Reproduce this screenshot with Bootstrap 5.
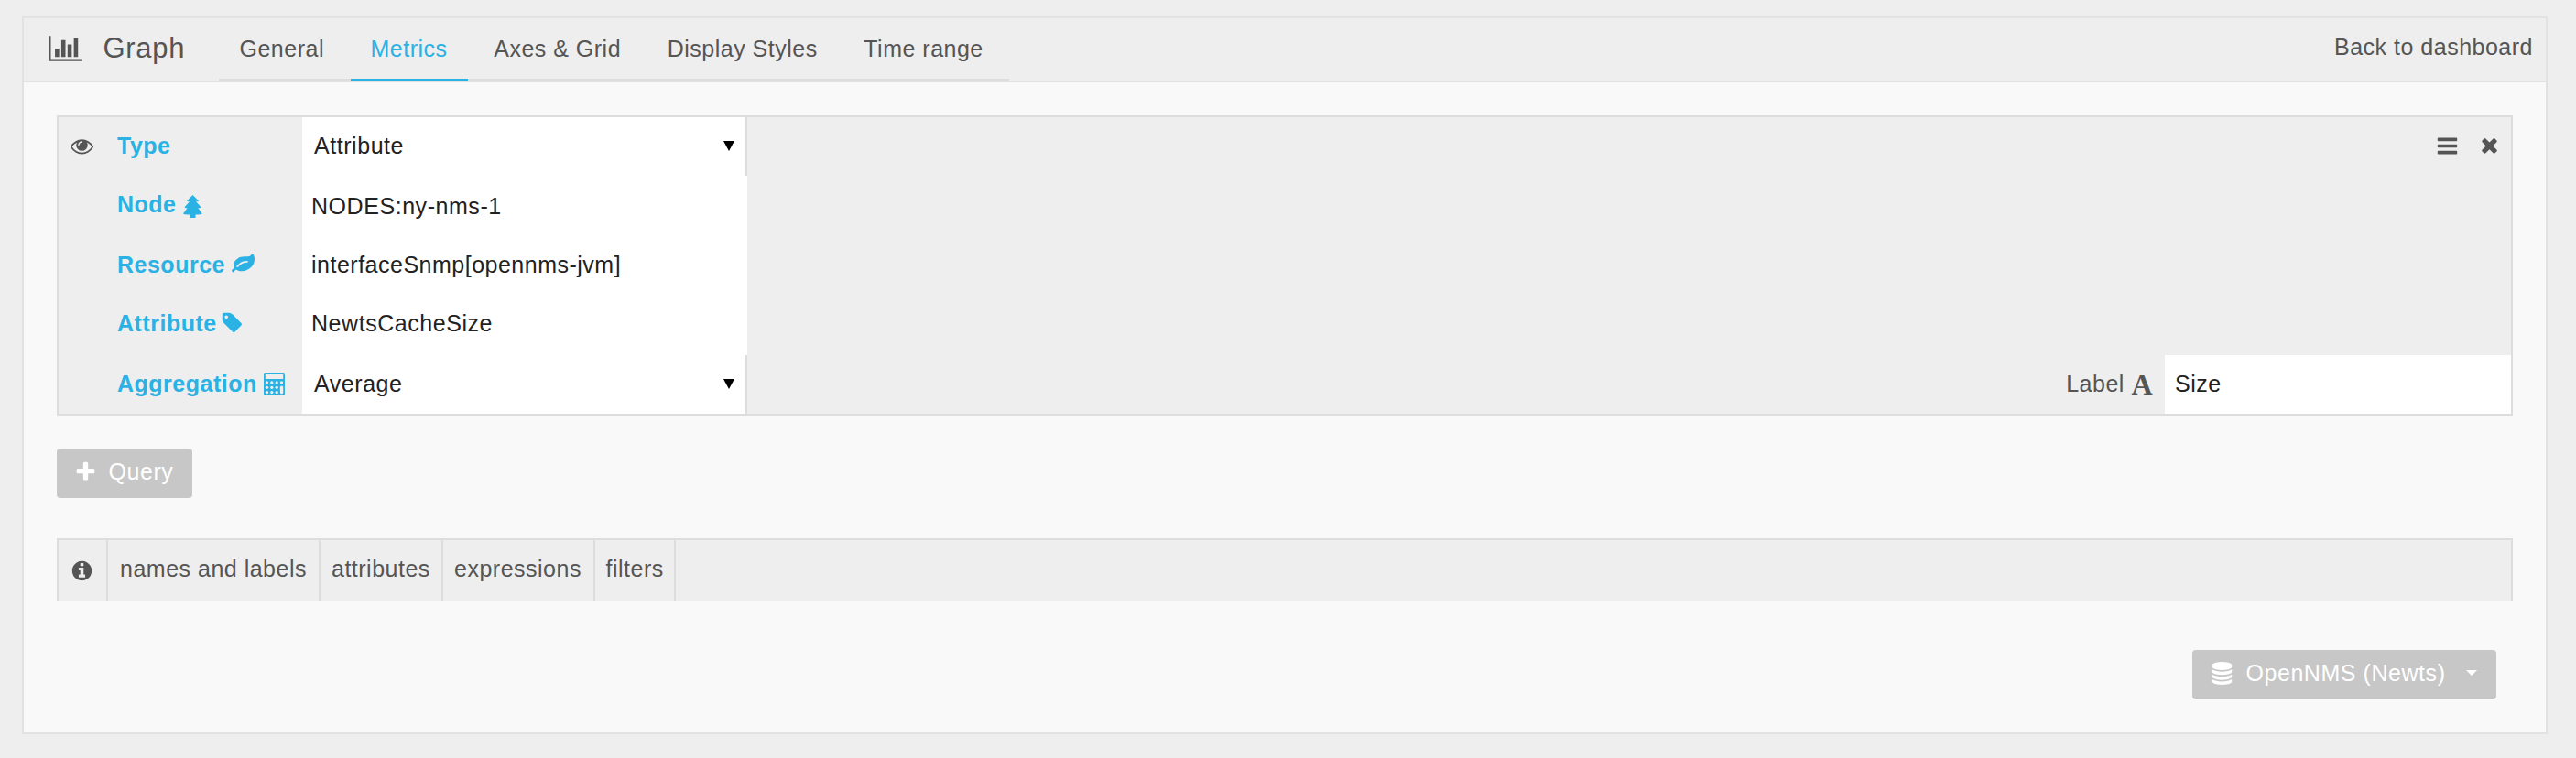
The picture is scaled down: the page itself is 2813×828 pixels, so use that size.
<!DOCTYPE html>
<html lang="en">
<head>
<meta charset="utf-8">
<title>Graph - Metrics</title>
<link href="https://cdn.jsdelivr.net/npm/bootstrap@5.3.0/dist/css/bootstrap.min.css" rel="stylesheet">
<style>
body{background:#eee;color:#555;font-family:"Liberation Sans",Arial,sans-serif;font-size:25px;letter-spacing:.5px;line-height:62px;overflow:hidden}
.editor{margin:18px 31px 0 24px;height:784px;background:#f9f9f9;border:2px solid #e2e2e2;border-radius:0}
.editor-head{height:70px;border-bottom:2px solid #e2e2e2;background:#eee;padding:0 14px 0 27px}
.editor-title{font-size:31px;letter-spacing:.7px;line-height:66px;margin-left:22.5px;width:126.5px}
.editor-tabs{border-bottom:2px solid #ddd;height:68px;padding-right:6px;gap:6.6px}
.editor-tabs .nav-link{color:#555;padding:0 22px;line-height:66px;height:68px;border-bottom:2px solid transparent}
.editor-tabs .nav-link:first-child{padding-left:22.5px}
.editor-tabs .nav-link.active{color:#2ab2e4;border-color:#2ab2e4}
.fa{width:25px;height:25px;fill:currentColor;flex:none;display:block}
.editor-body{padding:36px}
.query{border:2px solid #ddd;background:#eee}
.q-row{height:64px}
.q-row.tall{height:66px}
.q-key{width:266px;padding-left:64px;font-weight:700;color:#2ab2e4}
.q-key.toggle{padding-left:12.5px}
.q-key.toggle .fa{color:#555}
.q-val{width:486px;background:#fff;color:#222;padding-left:10px;letter-spacing:.55px}
.q-val.pick{border-right:2px solid #ddd;padding:0 12px 0 13px}
.tri{width:12px;height:11px;margin-top:26px;background:#000;clip-path:polygon(0 0,100% 0,50% 100%)}
.q-label{width:378px;background:#fff;color:#222;padding-left:11px}
.serif-a{font:700 32px/62px "Liberation Serif",serif;letter-spacing:0;margin:0 13.5px 0 7.5px;position:relative;top:1px}
.btn-soft{background:#c7c7c7;color:#fff;font-size:25px;letter-spacing:.55px;height:54px;line-height:50px;border:0;border-radius:4px;padding:0}
.help{border:2px solid #ddd;border-bottom:0;background:#eee;height:68px;margin-top:44px}
.help div{border-right:2px solid #ddd}
</style>
</head>
<body>
<main class="card editor">
  <header class="editor-head d-flex">
    <svg class="fa" style="width:37px;height:32px;margin-top:17px" viewBox="0 0 2048 1792"><path d="M640 896v512h-256v-512h256zm384-512v1024h-256v-1024h256zm1024 1152v128h-2048v-1536h128v1408h1920zm-640-896v768h-256v-768h256zm384-384v1152h-256v-1152h256z"/></svg>
    <div class="editor-title">Graph</div>
    <nav class="nav editor-tabs flex-nowrap">
      <a class="nav-link">General</a><a class="nav-link active">Metrics</a><a class="nav-link">Axes &amp; Grid</a><a class="nav-link">Display Styles</a><a class="nav-link">Time range</a>
    </nav>
    <div class="ms-auto">Back to dashboard</div>
  </header>
  <div class="editor-body">
    <section class="query">
      <div class="q-row d-flex">
        <div class="q-key toggle d-flex"><svg class="fa" style="margin:18.5px 26.5px 0 0" viewBox="0 0 1792 1792"><path d="M1664 960q-152-236-381-353 61 104 61 225 0 185-131.500 316.500t-316.500 131.500-316.500-131.500-131.500-316.500q0-121 61-225-229 117-381 353 133 205 333.500 326.500t434.500 121.500 434.500-121.500 333.500-326.500zm-720-384q0-20-14-34t-34-14q-125 0-214.500 89.500t-89.500 214.500q0 20 14 34t34 14 34-14 14-34q0-86 61-147t147-61q20 0 34-14t14-34zm848 384q0 34-20 69-140 230-376.500 368.500t-499.500 138.500-499.500-139-376.500-368q-20-35-20-69t20-69q140-229 376.500-368t499.500-139 499.500 139 376.500 368q20 35 20 69z"/></svg>Type</div>
        <div class="q-val pick d-flex justify-content-between">Attribute<span class="tri"></span></div>
        <svg class="fa ms-auto" style="margin-top:18.5px" viewBox="0 0 1792 1792"><path d="M1664 1344v128q0 26-19 45t-45 19h-1408q-26 0-45-19t-19-45v-128q0-26 19-45t45-19h1408q26 0 45 19t19 45zm0-512v128q0 26-19 45t-45 19h-1408q-26 0-45-19t-19-45v-128q0-26 19-45t45-19h1408q26 0 45 19t19 45zm0-512v128q0 26-19 45t-45 19h-1408q-26 0-45-19t-19-45v-128q0-26 19-45t45-19h1408q26 0 45 19t19 45z"/></svg>
        <svg class="fa" style="margin:18px 11px 0 21px" viewBox="0 0 1792 1792"><path d="M1490 1322q0 40-28 68l-136 136q-28 28-68 28t-68-28l-294-294-294 294q-28 28-68 28t-68-28l-136-136q-28-28-28-68t28-68l294-294-294-294q-28-28-28-68t28-68l136-136q28-28 68-28t68 28l294 294 294-294q28-28 68-28t68 28l136 136q28 28 28 68t-28 68l-294 294 294 294q28 28 28 68z"/></svg>
      </div>
      <div class="q-row tall d-flex">
        <div class="q-key d-flex">Node<svg class="fa" style="width:21px;margin:20.5px 0 0 7.5px" viewBox="0 0 21 25"><path d="M10.500 0l6.500 6.500q-.5 1-3 .8l5.500 6q-.5 1.200-3.200 1l4.500 6.200q-.6 1-7.300 1v3.500h-6v-3.500q-6.700 0-7.500-1l4.500-6.200q-2.700.2-3-1l5.500-6q-2.500.2-3-.8z"/></svg></div>
        <div class="q-val" style="padding-top:2px">NODES:ny-nms-1</div>
      </div>
      <div class="q-row d-flex">
        <div class="q-key d-flex">Resource<svg class="fa" style="margin:18px 0 0 7px" viewBox="0 0 1792 1792"><path d="M1280 704q0-26-19-45t-45-19q-172 0-318 49.500t-259.500 134-235.500 219.500q-19 21-19 45 0 26 19 45t45 19q24 0 45-19 27-24 74-71t67-66q137-124 268.500-176t313.500-52q26 0 45-19t19-45zm512-198q0 95-20 193-46 224-184.500 383t-357.500 268q-214 108-438 108-148 0-286-47-15-5-88-42t-96-37q-16 0-39.500 32t-45 70-52.500 70-60 32q-43 0-63.500-17.500t-45.500-59.500q-2-4-6-11t-5.500-10-3-9.500-1.500-13.500q0-35 31-73.500t68-65.500 68-56 31-48q0-4-14-38t-16-44q-9-51-9-104 0-115 43.500-220t119-184.500 170.500-139 204-95.500q55-18 145-25.500t179.500-9 178.500-6 163.500-24 113.500-56.500l29.500-29.500 29.500-28 27-20 36.500-16 43.500-4.500q39 0 70.500 46t47.500 112 24 124 8 96z"/></svg></div>
        <div class="q-val" style="letter-spacing:.5px">interfaceSnmp[opennms-jvm]</div>
      </div>
      <div class="q-row tall d-flex">
        <div class="q-key d-flex">Attribute<svg class="fa" style="margin:17.5px 0 0 4.5px" viewBox="0 0 1792 1792"><path d="M576 448q0-53-37.500-90.500t-90.500-37.500-90.500 37.500-37.500 90.500 37.500 90.500 90.500 37.500 90.500-37.500 37.500-90.500zm1067 576q0 53-37 90l-491 492q-39 37-91 37-53 0-90-37l-715-716q-38-37-64.500-101t-26.500-117v-416q0-52 38-90t90-38h416q53 0 117 26.500t102 64.500l715 714q37 39 37 91z"/></svg></div>
        <div class="q-val">NewtsCacheSize</div>
      </div>
      <div class="q-row d-flex">
        <div class="q-key d-flex">Aggregation<svg class="fa" style="width:23px;margin:18.5px 0 0 7px" viewBox="0 0 23 25"><path fill-rule="evenodd" d="M1.500 0h20q1.500 0 1.500 1.500v22q0 1.500-1.500 1.500h-20q-1.500 0-1.500-1.500v-22q0-1.500 1.500-1.500zM2.300 1.800q-.5 0-.5.500v4.200q0 .5.500.500h18.400q.5 0 .5-.5v-4.200q0-.5-.5-.5z"/><g fill="#eee"><circle cx="3.500" cy="10.900" r="1.650"/><circle cx="8.800" cy="10.900" r="1.650"/><circle cx="14.200" cy="10.900" r="1.650"/><circle cx="19.500" cy="10.900" r="1.650"/><circle cx="3.500" cy="16.300" r="1.650"/><circle cx="8.800" cy="16.300" r="1.650"/><circle cx="14.200" cy="16.300" r="1.650"/><circle cx="3.500" cy="21.600" r="1.650"/><circle cx="8.800" cy="21.600" r="1.650"/><circle cx="14.200" cy="21.600" r="1.650"/><rect x="17.900" y="14.600" width="3.300" height="8.700" rx="1.600"/></g></svg></div>
        <div class="q-val pick d-flex justify-content-between">Average<span class="tri"></span></div>
        <div class="ms-auto">Label</div><span class="serif-a">A</span>
        <div class="q-label">Size</div>
      </div>
    </section>
    <button class="btn btn-soft d-flex" style="width:148px;margin-top:36px"><svg class="fa" style="margin:12.5px 12.5px 0 19px" viewBox="0 0 1792 1792"><path d="M1600 736v192q0 40-28 68t-68 28h-416v416q0 40-28 68t-68 28h-192q-40 0-68-28t-28-68v-416h-416q-40 0-68-28t-28-68v-192q0-40 28-68t68-28h416v-416q0-40 28-68t68-28h192q40 0 68 28t28 68v416h416q40 0 68 28t28 68z"/></svg>Query</button>
    <section class="help d-flex">
      <div style="width:54px"><svg class="fa" style="margin:20.5px 0 0 13px" viewBox="0 0 1792 1792"><path d="M1152 1376v-160q0-14-9-23t-23-9h-96v-512q0-14-9-23t-23-9h-320q-14 0-23 9t-9 23v160q0 14 9 23t23 9h96v320h-96q-14 0-23 9t-9 23v160q0 14 9 23t23 9h448q14 0 23-9t9-23zm-128-896v-160q0-14-9-23t-23-9h-192q-14 0-23 9t-9 23v160q0 14 9 23t23 9h192q14 0 23-9t9-23zm640 416q0 209-103 385.500t-279.500 279.500-385.500 103-385.500-103-279.500-279.500-103-385.500 103-385.500 279.500-279.500 385.500-103 385.500 103 279.500 279.500 103 385.500z"/></svg></div>
      <div style="width:232px;padding-left:13px">names and labels</div>
      <div style="width:134px;padding-left:12px">attributes</div>
      <div style="width:166px;padding-left:12px">expressions</div>
      <div style="width:88px;padding-left:11.5px">filters</div>
    </section>
    <button class="btn btn-soft d-flex ms-auto" style="width:332px;margin-top:54px;margin-right:18px"><svg class="fa" style="margin:12.5px 13.5px 0 20px" viewBox="0 0 1792 1792"><path d="M896 768q237 0 443-43t325-127v170q0 69-103 128t-280 93.500-385 34.500-385-34.500-280-93.500-103-128v-170q119 84 325 127t443 43zm0 768q237 0 443-43t325-127v170q0 69-103 128t-280 93.500-385 34.500-385-34.500-280-93.500-103-128v-170q119 84 325 127t443 43zm0-384q237 0 443-43t325-127v170q0 69-103 128t-280 93.500-385 34.500-385-34.500-280-93.500-103-128v-170q119 84 325 127t443 43zm0-1152q208 0 385 34.500t280 93.500 103 128v128q0 69-103 128t-280 93.500-385 34.500-385-34.500-280-93.500-103-128v-128q0-69 103-128t280-93.500 385-34.500z"/></svg>OpenNMS (Newts)<svg class="ms-auto" style="margin:22px 21.5px 0 0" width="12" height="6" fill="#fff"><path d="M0 0h12l-6 6z"/></svg></button>
  </div>
</main>
<script src="https://cdn.jsdelivr.net/npm/bootstrap@5.3.0/dist/js/bootstrap.bundle.min.js"></script>
</body>
</html>
